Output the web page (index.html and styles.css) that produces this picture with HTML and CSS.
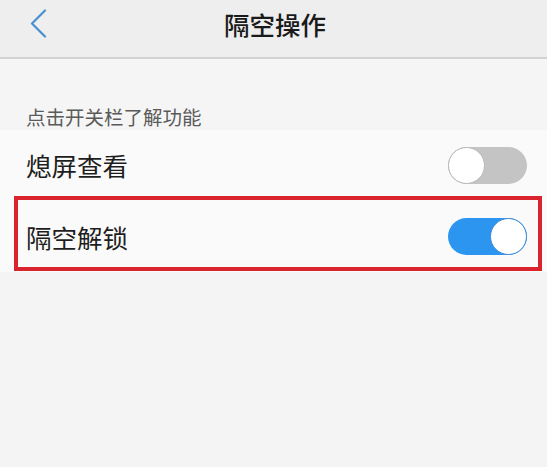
FILE: index.html
```html
<!DOCTYPE html>
<html lang="zh-CN">
<head>
<meta charset="utf-8">
<title>隔空操作</title>
<link rel="stylesheet" href="styles.css">
</head>
<body>
<div class="page">
  <header class="topbar">
    <span class="back">
      <svg width="18" height="30" viewBox="0 0 18 30"><path d="M15 1.5 L2 14.5 L15 27.5" fill="none" stroke="#4a8fd0" stroke-width="2.2" stroke-linecap="round" stroke-linejoin="round"/></svg>
    </span>
    <h1 class="title">隔空操作</h1>
  </header>
  <div class="section-label">点击开关栏了解功能</div>
  <div class="row row-first">
    <span class="row-text">熄屏查看</span>
    <span class="switch"><span class="knob"></span></span>
  </div>
  <div class="row row-second highlighted">
    <span class="row-text">隔空解锁</span>
    <span class="switch on"><span class="knob"></span></span>
  </div>
</div>
</body>
</html>
```

FILE: styles.css
```css
html, body {
  margin: 0;
  padding: 0;
}
body {
  background: #f4f4f4;
  font-family: "Noto Sans CJK SC", "Noto Sans", sans-serif;
}
.page {
  width: 547px;
  min-height: 467px;
  background: #f4f4f4;
}
.topbar {
  height: 57px;
  background: #eeeeee;
  border-bottom: 2px solid #d2d2d2;
  display: flex;
  align-items: center;
  justify-content: center;
  position: relative;
}
.back {
  position: absolute;
  left: 30px;
  top: 9px;
  width: 18px;
  height: 30px;
}
.back svg {
  display: block;
}
.title {
  margin: 0 0 10px 0;
  font-size: 25.5px;
  font-weight: 500;
  color: #1a1a1a;
  line-height: 30px;
  letter-spacing: 0;
  padding-left: 3px;
}
.section-label {
  background: #f5f5f5;
  padding: 44px 0 0 26px;
  height: 27px;
  line-height: 27px;
  font-size: 19.5px;
  color: #5a5a5a;
}
.row {
  background: #fafafa;
  display: flex;
  align-items: center;
  justify-content: space-between;
  padding: 0 20px 0 26px;
}
.row-first {
  height: 68px;
  padding-top: 2px;
  box-sizing: border-box;
}
.row-second {
  height: 74px;
  padding-top: 3px;
  box-sizing: border-box;
}
.row-text {
  font-size: 25.5px;
  color: #1e1e1e;
  line-height: 30px;
}
.switch {
  width: 79px;
  height: 37px;
  border-radius: 19px;
  background: #c4c4c4;
  display: flex;
  align-items: center;
  justify-content: flex-start;
  box-sizing: border-box;
}
.switch .knob {
  width: 37px;
  height: 37px;
  border-radius: 50%;
  background: #ffffff;
  border: 1.5px solid #b8b8b8;
  box-sizing: border-box;
}
.switch.on {
  background: #2c95ef;
  justify-content: flex-end;
}
.switch.on .knob {
  border-color: #3a8ad6;
}
.highlighted {
  position: relative;
}
.highlighted::after {
  content: "";
  position: absolute;
  top: -2px;
  left: 14px;
  right: 5px;
  bottom: 1px;
  border: 4.5px solid #d9232d;
  pointer-events: none;
}
```
